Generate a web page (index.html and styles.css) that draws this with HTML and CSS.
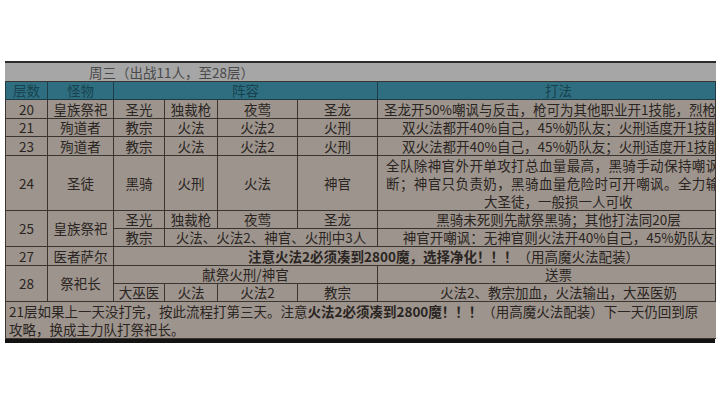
FILE: index.html
```html
<!DOCTYPE html>
<html lang="zh">
<head>
<meta charset="utf-8">
<link rel="stylesheet" href="styles.css">
</head>
<body>
<div class="page">
  <table class="sheet">
    <colgroup>
      <col class="c1"><col class="c2"><col class="c3"><col class="c4"><col class="c5"><col class="c6"><col class="c7">
    </colgroup>
    <tr class="r-title">
      <td colspan="7" class="title">周三（出战11人，至28层）</td>
    </tr>
    <tr class="r-head">
      <td>层数</td><td>怪物</td><td colspan="4">阵容</td><td class="play">打法</td>
    </tr>
    <tr class="r19">
      <td>20</td><td>皇族祭祀</td><td>圣光</td><td>独裁枪</td><td>夜莺</td><td>圣龙</td>
      <td class="left"><div class="clip">圣龙开50%嘲讽与反击，枪可为其他职业开1技能，烈枪适度</div></td>
    </tr>
    <tr class="r18">
      <td>21</td><td>殉道者</td><td>教宗</td><td>火法</td><td>火法2</td><td>火刑</td>
      <td class="play"><div class="clip">双火法都开40%自己，45%奶队友；火刑适度开1技能</div></td>
    </tr>
    <tr class="r19">
      <td>23</td><td>殉道者</td><td>教宗</td><td>火法</td><td>火法2</td><td>火刑</td>
      <td class="play"><div class="clip">双火法都开40%自己，45%奶队友；火刑适度开1技能</div></td>
    </tr>
    <tr class="r54">
      <td>24</td><td>圣徒</td><td>黑骑</td><td>火刑</td><td>火法</td><td>神官</td>
      <td class="block"><div class="clip wide">全队除神官外开单攻打总血量最高，黑骑手动保持嘲讽</div><div class="clip wide">断；神官只负责奶，黑骑血量危险时可开嘲讽。全力输</div><div class="clip last">大圣徒，一般损一人可收</div></td>
    </tr>
    <tr class="r18">
      <td rowspan="2">25</td><td rowspan="2">皇族祭祀</td><td>圣光</td><td>独裁枪</td><td>夜莺</td><td>圣龙</td>
      <td class="play"><div class="clip">黑骑未死则先献祭黑骑；其他打法同20层</div></td>
    </tr>
    <tr class="r18">
      <td>教宗</td><td colspan="3">火法、火法2、神官、火刑中3人</td>
      <td class="play"><div class="clip">神官开嘲讽：无神官则火法开40%自己，45%奶队友</div></td>
    </tr>
    <tr class="r19">
      <td>27</td><td>医者萨尔</td>
      <td colspan="5" class="notice"><b>注意火法2必须凑到2800魔，选择净化！！！</b>（用高魔火法配装）</td>
    </tr>
    <tr class="r18">
      <td rowspan="2">28</td><td rowspan="2">祭祀长</td><td colspan="4">献祭火刑/神官</td>
      <td class="play">送票</td>
    </tr>
    <tr class="r18">
      <td>大巫医</td><td>火法</td><td>火法2</td><td>教宗</td>
      <td class="play"><div class="clip">火法2、教宗加血，火法输出，大巫医奶</div></td>
    </tr>
    <tr class="r36">
      <td colspan="7" class="note"><div class="clip">21层如果上一天没打完，按此流程打第三天。注意<b>火法2必须凑到2800魔！！！</b>（用高魔火法配装）下一天仍回到原</div><div class="clip">攻略，换成主力队打祭祀长。</div></td>
    </tr>
  </table>
  <div class="bar"></div>
</div>
</body>
</html>
```

FILE: styles.css
```css
html, body {
  margin: 0;
  padding: 0;
  background: #ffffff;
}

.page {
  padding: 61px 0 0 5px;
  width: 710px;
}

.sheet {
  width: 710px;
  table-layout: fixed;
  border-collapse: collapse;
  font-family: "Noto Sans CJK SC", "Noto Sans", sans-serif;
  font-size: 13.5px;
  color: #2a2522;
  background: #9d948d;
}

.c1 { width: 42px; }
.c2 { width: 66px; }
.c3 { width: 51px; }
.c4 { width: 53px; }
.c5 { width: 80px; }
.c6 { width: 80px; }
.c7 { width: 338px; }

.sheet td {
  border: 1px solid #3b3531;
  padding: 0;
  text-align: center;
  vertical-align: middle;
  line-height: 17px;
  white-space: nowrap;
  overflow: hidden;
}

.r-title td {
  height: 18px;
  background: #a6a6a6;
  color: #4a4a4a;
  border-top: 2px solid #2a2a2a;
  border-left-color: #a6a6a6;
  border-right-color: #a6a6a6;
}

.title {
  text-align: left !important;
  padding-left: 83px !important;
}

.r-head td {
  height: 17px;
  background: #2f6e80;
  color: #17434f;
  border-color: #1f3d47;
}

.r19 td { height: 18px; }
.r18 td { height: 17px; }
.r54 td { height: 53px; }
.r36 td { height: 35px; }

.sheet td.play {
  padding-left: 24px;
}

.sheet td.left {
  text-align: left;
  padding-left: 6px;
}

.sheet td.block {
  text-align: left;
  padding-left: 8px;
  line-height: 18px;
}

.wide {
  letter-spacing: 0.4px;
}

.last {
  padding-left: 98px;
}

.clip {
  overflow: hidden;
  white-space: nowrap;
}

.notice {
  padding-left: 58px !important;
}

.notice b, .note b {
  font-weight: 700;
}

.sheet td.note {
  text-align: left;
  padding-left: 3px;
  line-height: 18px;
  border-right-color: #9d948d;
}

.bar {
  height: 4px;
  background: #121212;
}
```
